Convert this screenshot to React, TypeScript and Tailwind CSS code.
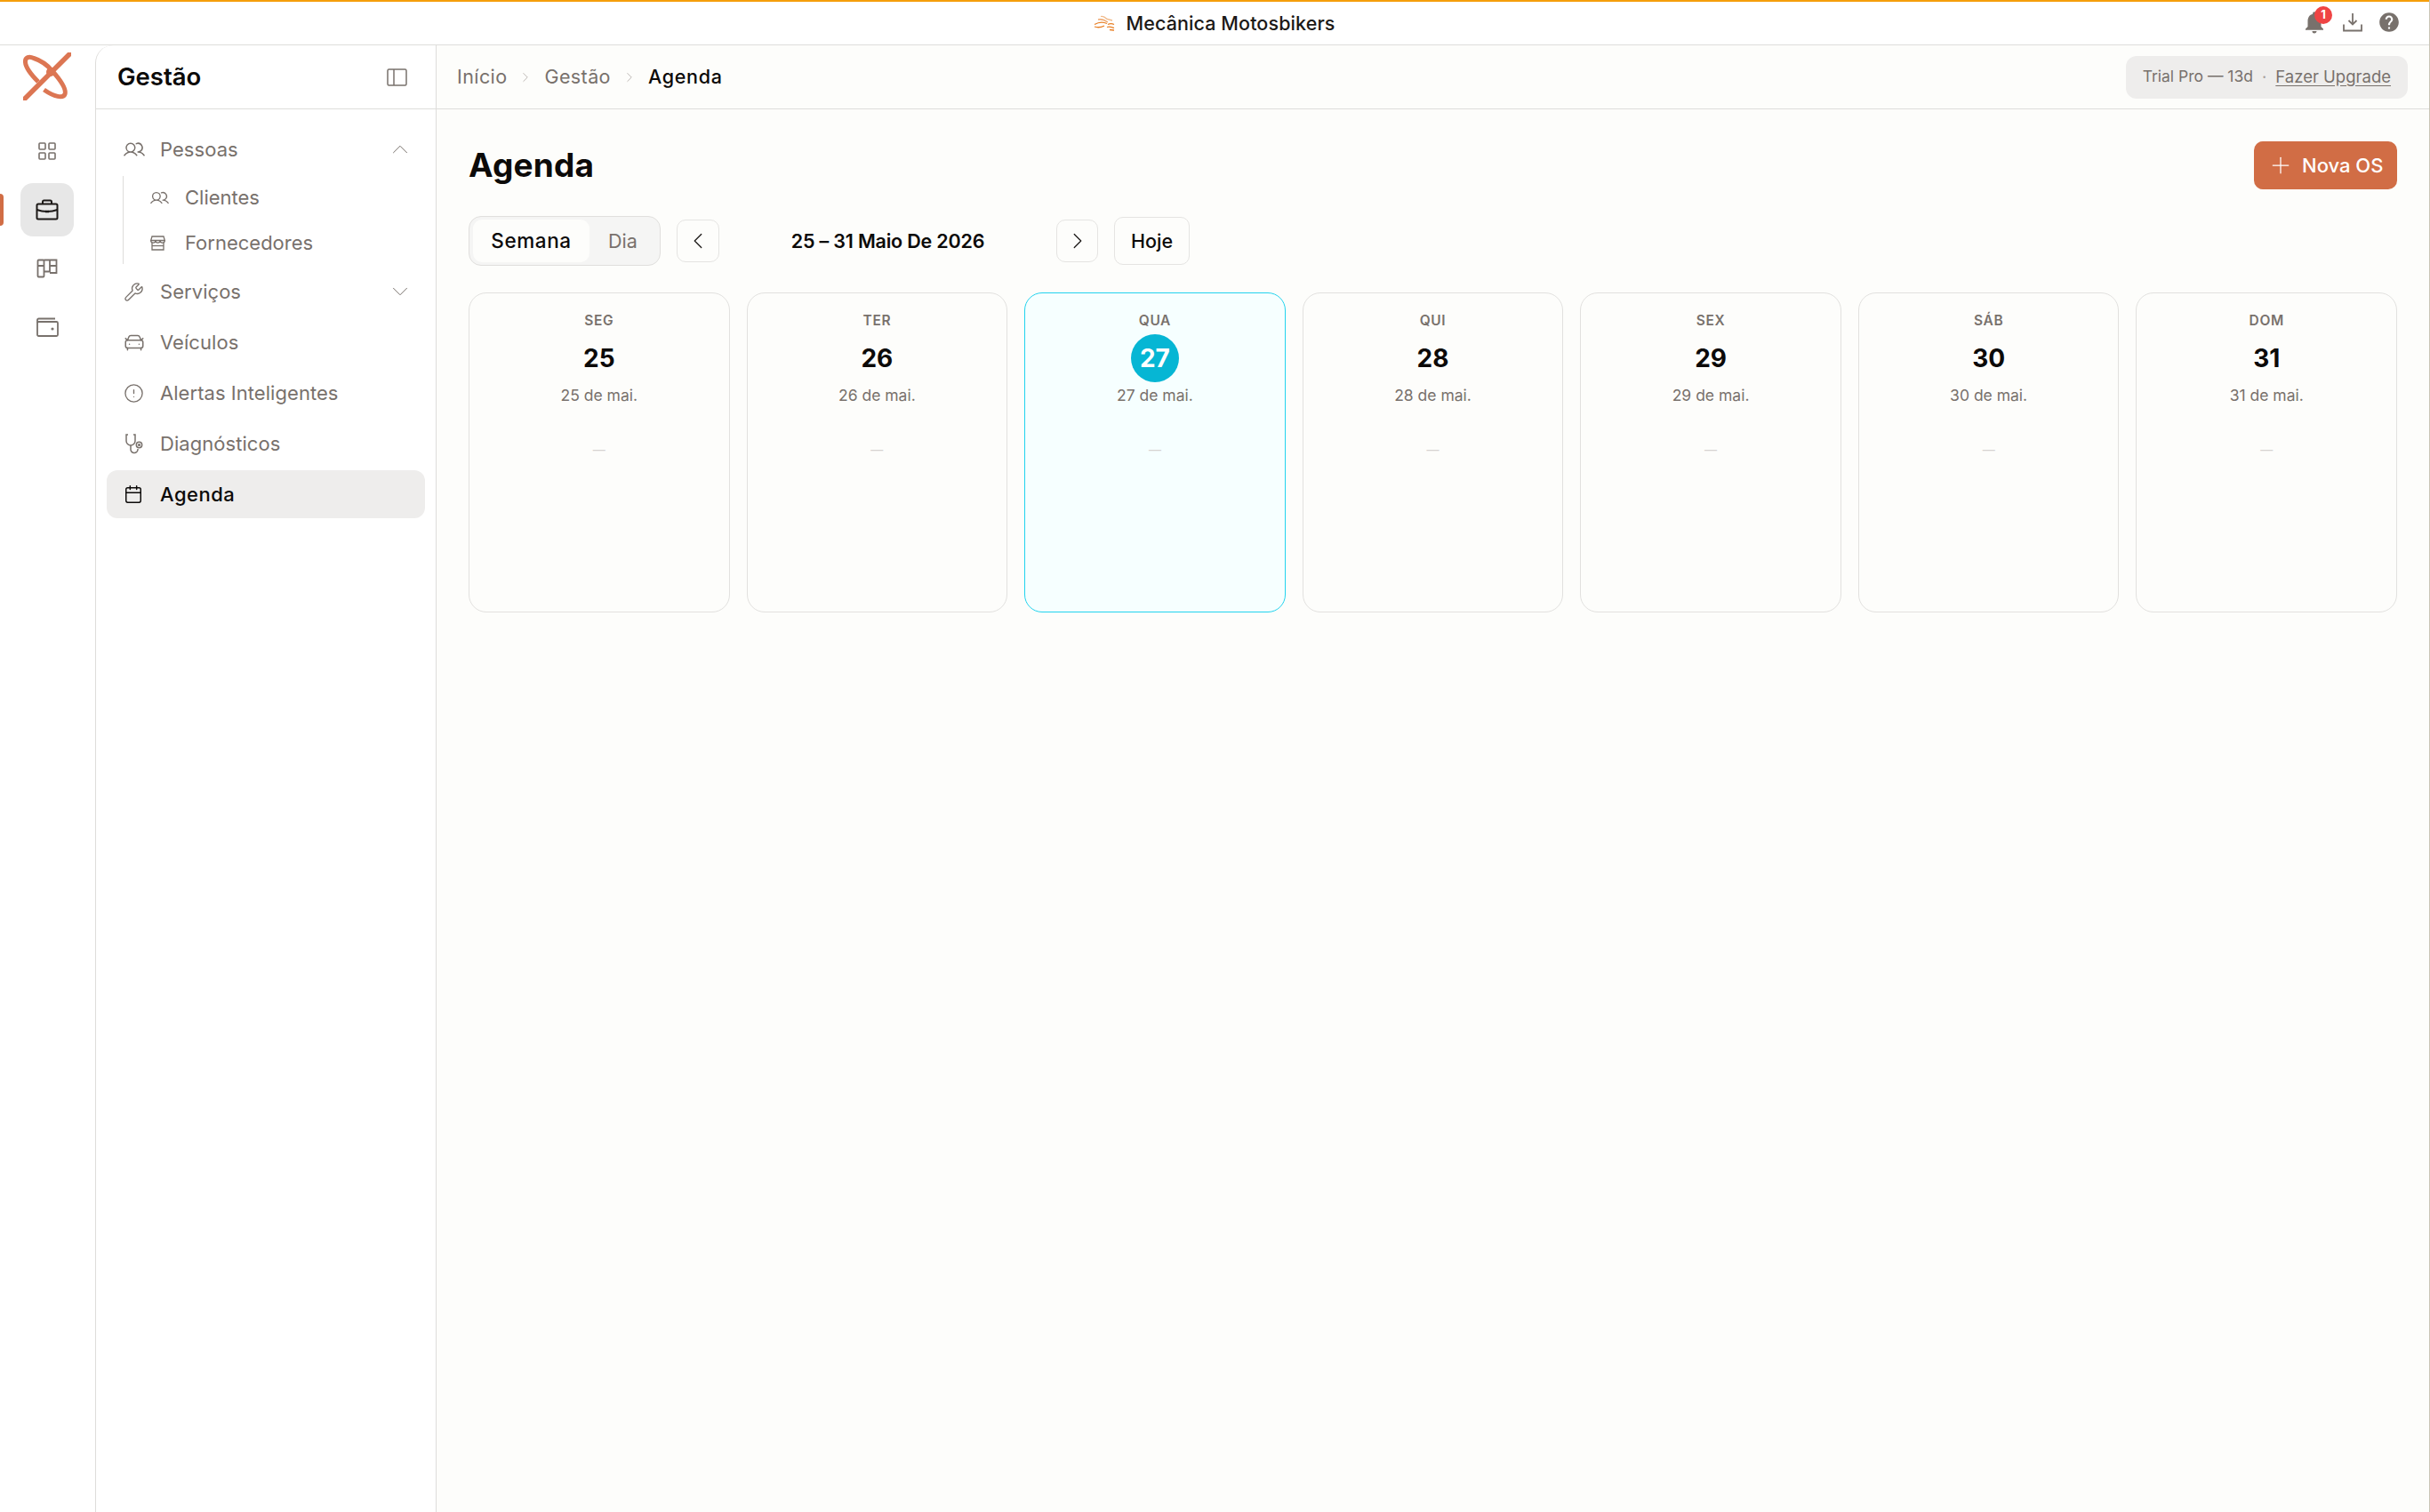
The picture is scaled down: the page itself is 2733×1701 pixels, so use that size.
import { Calendar, CarFront, ChevronDown, ChevronLeft, ChevronRight, ChevronUp, CircleAlert, LayoutGrid, Plus, Wrench } from "lucide-react";
import { MdHelp, MdNotifications } from "react-icons/md";
import { PiUsers } from "react-icons/pi";

const font = "font-['Inter','Liberation_Sans',sans-serif]";

const days = [
  { name: "SEG", n: 25 },
  { name: "TER", n: 26 },
  { name: "QUA", n: 27, today: true },
  { name: "QUI", n: 28 },
  { name: "SEX", n: 29 },
  { name: "SÁB", n: 30 },
  { name: "DOM", n: 31 },
];

function Logo() {
  return (
    <svg width="54" height="54" viewBox="0 0 54 54" fill="none" stroke="#dc7653">
      <path d="M0 54 L54 0" strokeWidth="5.500" />
      <path d="M17 33 C10 26 3 18 2.500 11 C2 5 7 4 12 6.500 C20 9 28 15 33 21 C41 30 49 41 47 47 C45 52 35 50 23.500 42" strokeWidth="5" />
      <circle cx="31" cy="22" r="5" fill="#dc7653" stroke="none" />
    </svg>
  );
}

function MotoLogo() {
  return (
    <svg width="24" height="18" viewBox="0 0 24 18" fill="none" stroke="#e87f24" strokeWidth="1.300">
      <path d="M8 1.500c3-1 5 1 7 3l6 1.500" stroke="#f0b888" />
      <path d="M5 5c4-1 8 1 11 3" stroke="#eea66c" />
      <path d="M1 10.500c5-3 10-3 14-1" />
      <path d="M1 13c4 1.500 8 .5 11-1" />
      <path d="M16 10.500c2-1 5-1 7 0" />
      <path d="M15 13.500c3-1 5 0 8 1" />
      <path d="M18 16.500l5 .5" />
    </svg>
  );
}

function BriefcaseIcon() {
  return (
    <svg width="26" height="24" viewBox="0 0 26 24" fill="none" stroke="#1c1917" strokeWidth="2">
      <rect x="1.500" y="5.500" width="23" height="17" rx="1.500" />
      <path d="M8 5.500V3a1.500 1.500 0 0 1 1.500-1.500h7A1.500 1.500 0 0 1 18 3v2.500" />
      <path d="M1.500 12c4 1.500 7 2 11.500 2s7.500-.5 11.500-2" />
      <path d="M11 14h4" strokeWidth="2.500" />
    </svg>
  );
}

function BoardIcon() {
  return (
    <svg width="24" height="22" viewBox="0 0 24 22" fill="none" stroke="#78716c" strokeWidth="1.800">
      <rect x="1.500" y="1.500" width="7" height="19" rx="1" />
      <path d="M8.500 1.500h14a1 1 0 0 1 0 0v14.500h-7.500" />
      <path d="M15 1.500v13H8.500" />
      <path d="M1.500 8h7M15 8h7.500" />
    </svg>
  );
}

function WalletIcon() {
  return (
    <svg width="25" height="22" viewBox="0 0 25 22" fill="none" stroke="#78716c" strokeWidth="1.800">
      <rect x="1" y="5" width="23" height="16" rx="1.500" />
      <path d="M1 6V3a1.500 1.500 0 0 1 1.500-1.500H21" />
      <circle cx="18" cy="13" r="0.700" fill="#78716c" />
    </svg>
  );
}

function DownloadIcon() {
  return (
    <svg width="22" height="22" viewBox="0 0 22 22" fill="none" stroke="#78716c" strokeWidth="1.800">
      <path d="M11 1v12" />
      <path d="M6.500 9l4.500 4.500L15.500 9" />
      <path d="M1 13.500v7h20v-7" />
    </svg>
  );
}

function PanelIcon() {
  return (
    <svg width="23" height="20" viewBox="0 0 23 20" fill="none" stroke="#78716c" strokeWidth="1.500">
      <rect x="1" y="1" width="21" height="18" rx="1.500" />
      <path d="M8 1v18" />
    </svg>
  );
}

function StoreIcon() {
  return (
    <svg width="17" height="17" viewBox="0 0 17 17" fill="none" stroke="#78716c" strokeWidth="1.300">
      <path d="M2 1h13l1.300 4.500H.7L2 1z" />
      <path d="M.7 5.500a2.600 2.600 0 0 0 5.200 0 2.600 2.600 0 0 0 5.200 0 2.600 2.600 0 0 0 5.200 0" />
      <path d="M2 8v8h13V8" />
      <path d="M2 11.500h13" />
    </svg>
  );
}

function StethoscopeIcon() {
  return (
    <svg width="23" height="23" viewBox="0 0 23 23" fill="none" stroke="#78716c" strokeWidth="1.500">
      <path d="M5 1H3v7a5 5 0 0 0 10 0V1h-2" />
      <path d="M8 13v4a4 4 0 0 0 8 1v-1" />
      <circle cx="17.500" cy="12.500" r="3.200" />
      <circle cx="17.500" cy="12.500" r="0.800" />
    </svg>
  );
}

function RailButton({ children, active }: { children: React.ReactNode; active?: boolean }) {
  return (
    <div className={"relative flex h-[60px] w-[60px] items-center justify-center rounded-[14px] " + (active ? "bg-[#e7e7e7]" : "")}>
      {children}
    </div>
  );
}

function NavRow({ icon, label, chevron, active }: { icon: React.ReactNode; label: string; chevron?: "up" | "down"; active?: boolean }) {
  return (
    <div className={"flex h-[54px] items-center rounded-[12px] pl-[19px] pr-[13px] " + (active ? "bg-[#eeedec] text-[#0c0a09]" : "text-[#78716c]")}>
      <span className="flex w-[41px] items-center">{icon}</span>
      <span className={"flex-1 text-[22px] " + (active ? "font-medium tracking-[0.5px]" : "tracking-[0.05px]")}>{label}</span>
      {chevron === "up" && <ChevronUp size={30} strokeWidth={0.8} color="#78716c" />}
      {chevron === "down" && <ChevronDown size={30} strokeWidth={0.8} color="#78716c" />}
    </div>
  );
}

function DayCard({ name, n, today }: { name: string; n: number; today?: boolean }) {
  return (
    <div className={"flex h-[360px] flex-col items-center rounded-[20px] border pt-[21px] " + (today ? "border-[#22d3ee] bg-[#f6ffff]" : "border-[#e2e1df]")}>
      <div className="text-[15.500px] font-semibold leading-[20px] tracking-[0.6px] text-[#78716c]">{name}</div>
      <div className={"mt-[5px] flex h-[54px] w-[54px] items-center justify-center rounded-full text-[28px] font-bold " + (today ? "bg-[#06b6d4] text-white" : "text-[#0c0a09]")}>
        {n}
      </div>
      <div className="mt-[1px] text-[17.500px] leading-[28px] text-[#78716c]">{n} de mai.</div>
      <div className="mt-[33px] text-[14px] leading-[28px] text-[#d6d3d1]">—</div>
    </div>
  );
}

export default function App() {
  const navIcon = { size: 23, strokeWidth: 1.4 };
  return (
    <div className={font + " relative flex h-[1701px] w-[2733px] flex-col overflow-hidden border-r border-[#c9c5b5] bg-white"}>
      <header className="relative flex h-[51px] items-center justify-center border-t-2 border-b border-t-[#f59e0b] border-b-[#dedddb]">
        <div className="flex items-center gap-[12px]">
          <MotoLogo />
          <span className="text-[21.500px] font-medium tracking-[0.1px] text-[#1c1917]">Mecânica Motosbikers</span>
        </div>
        <div className="absolute right-[32px] top-[8px] flex items-center gap-[17px]">
          <div className="relative">
            <MdNotifications size={30} color="#78716c" />
            <span className="absolute -right-[5px] -top-[3px] flex h-[20px] w-[20px] items-center justify-center rounded-full bg-[#ef4444] text-[13px] font-bold text-white">1</span>
          </div>
          <DownloadIcon />
          <MdHelp size={26} color="#78716c" />
        </div>
      </header>

      <div className="flex min-h-0 flex-1">
        <aside className="flex w-[107px] flex-col items-center pr-[1px]">
          <div className="mt-[8px] h-[56px]"><Logo /></div>
          <div className="relative mt-[25px] flex flex-col items-center gap-[6px]">
            <RailButton><LayoutGrid size={24} strokeWidth={1.6} color="#78716c" /></RailButton>
            <RailButton active><BriefcaseIcon /></RailButton>
            <RailButton><BoardIcon /></RailButton>
            <RailButton><WalletIcon /></RailButton>
          </div>
        </aside>
        <div className="absolute left-0 top-[218px] h-[36px] w-[4px] rounded-r-[4px] bg-[#d16d45]" />

        <nav className="flex w-[384px] flex-col rounded-tl-[20px] border-l border-r border-[#dedddb] bg-white">
          <div className="flex h-[72px] items-center justify-between border-b border-[#dedddb] pl-[24px] pr-[32px]">
            <span className="text-[27.500px] font-semibold text-[#0c0a09]">Gestão</span>
            <PanelIcon />
          </div>
          <div className="flex flex-col gap-[3px] px-[12px] pt-[18px]">
            <NavRow icon={<PiUsers size={24} />} label="Pessoas" chevron="up" />
            <div className="mb-[1px] ml-[18px] flex flex-col gap-[3px] border-l border-[#dedddb] pl-[30px]">
              <div className="flex h-[48px] items-center text-[#78716c]">
                <span className="w-[39px]"><PiUsers size={21} /></span>
                <span className="text-[22px]">Clientes</span>
              </div>
              <div className="flex h-[48px] items-center text-[#78716c]">
                <span className="w-[39px]"><StoreIcon /></span>
                <span className="text-[22px]">Fornecedores</span>
              </div>
            </div>
            <NavRow icon={<Wrench {...navIcon} />} label="Serviços" chevron="down" />
            <NavRow icon={<CarFront size={26} strokeWidth={1.4} className="-ml-[1px]" />} label="Veículos" />
            <NavRow icon={<CircleAlert {...navIcon} />} label="Alertas Inteligentes" />
            <NavRow icon={<StethoscopeIcon />} label="Diagnósticos" />
            <NavRow icon={<Calendar size={22} strokeWidth={1.6} />} label="Agenda" active />
          </div>
        </nav>

        <main className="flex min-w-0 flex-1 flex-col bg-[#fdfdfb]">
          <div className="flex h-[72px] items-center justify-between border-b border-[#dedddb] pl-[23px] pr-[24px]">
            <div className="flex items-center text-[21.500px] tracking-[0.4px] text-[#78716c]">
              <span>Início</span>
              <ChevronRight size={18} strokeWidth={1} className="mx-[12px] text-[#a8a29e]" />
              <span>Gestão</span>
              <ChevronRight size={18} strokeWidth={1} className="mx-[12px] text-[#a8a29e]" />
              <span className="font-medium tracking-[0.7px] text-[#0c0a09]">Agenda</span>
            </div>
            <div className="flex h-[48px] items-center rounded-[12px] bg-[#eeedec] px-[19px] text-[18.500px] text-[#78716c]">
              <span className="text-[17.500px]">Trial Pro — 13d</span>
              <span className="mx-[10px] text-[#a8a29e]">·</span>
              <span className="underline underline-offset-[3px]">Fazer Upgrade</span>
            </div>
          </div>

          <div className="flex flex-col px-[36px]">
            <div className="mt-[36px] flex h-[54px] items-center justify-between">
              <h1 className="text-[37px] font-bold tracking-[0.2px] text-[#0c0a09]">Agenda</h1>
              <button className="flex h-[54px] w-[161px] items-center gap-[9px] rounded-[10px] bg-[#d16d45] pl-[15px] text-[22px] font-medium text-white">
                <Plus size={30} strokeWidth={1} />
                Nova OS
              </button>
            </div>

            <div className="mt-[30px] flex h-[56px] items-center">
              <div className="flex h-[56px] w-[216px] items-center rounded-[14px] border border-[#e0dfdd] bg-[#f5f5f4] p-[4px]">
                <div className="flex h-[48px] w-[131px] items-center justify-center rounded-[10px] bg-[#fdfdfb] text-[22.500px] font-medium tracking-[0.6px] text-[#0c0a09]">Semana</div>
                <div className="flex-1 text-center text-[21.500px] text-[#78716c]">Dia</div>
              </div>
              <div className="ml-[18px] flex h-[48px] w-[48px] items-center justify-center rounded-[10px] border border-[#e5e4e2]">
                <ChevronLeft size={30} strokeWidth={1} color="#1c1917" />
              </div>
              <div className="w-[379px] text-center text-[21.500px] font-semibold tracking-[-0.2px] text-[#0c0a09]">25 – 31 Maio De 2026</div>
              <div className="flex h-[48px] w-[47px] items-center justify-center rounded-[10px] border border-[#e5e4e2]">
                <ChevronRight size={30} strokeWidth={1} color="#1c1917" />
              </div>
              <div className="ml-[18px] flex h-[54px] w-[85px] items-center justify-center rounded-[10px] border border-[#e5e4e2] text-[21.500px] font-medium text-[#0c0a09]">Hoje</div>
            </div>

            <div className="mt-[30px] grid grid-cols-7 gap-[19px]">
              {days.map((d) => (
                <DayCard key={d.n} name={d.name} n={d.n} today={d.today} />
              ))}
            </div>
          </div>
        </main>
      </div>
    </div>
  );
}
